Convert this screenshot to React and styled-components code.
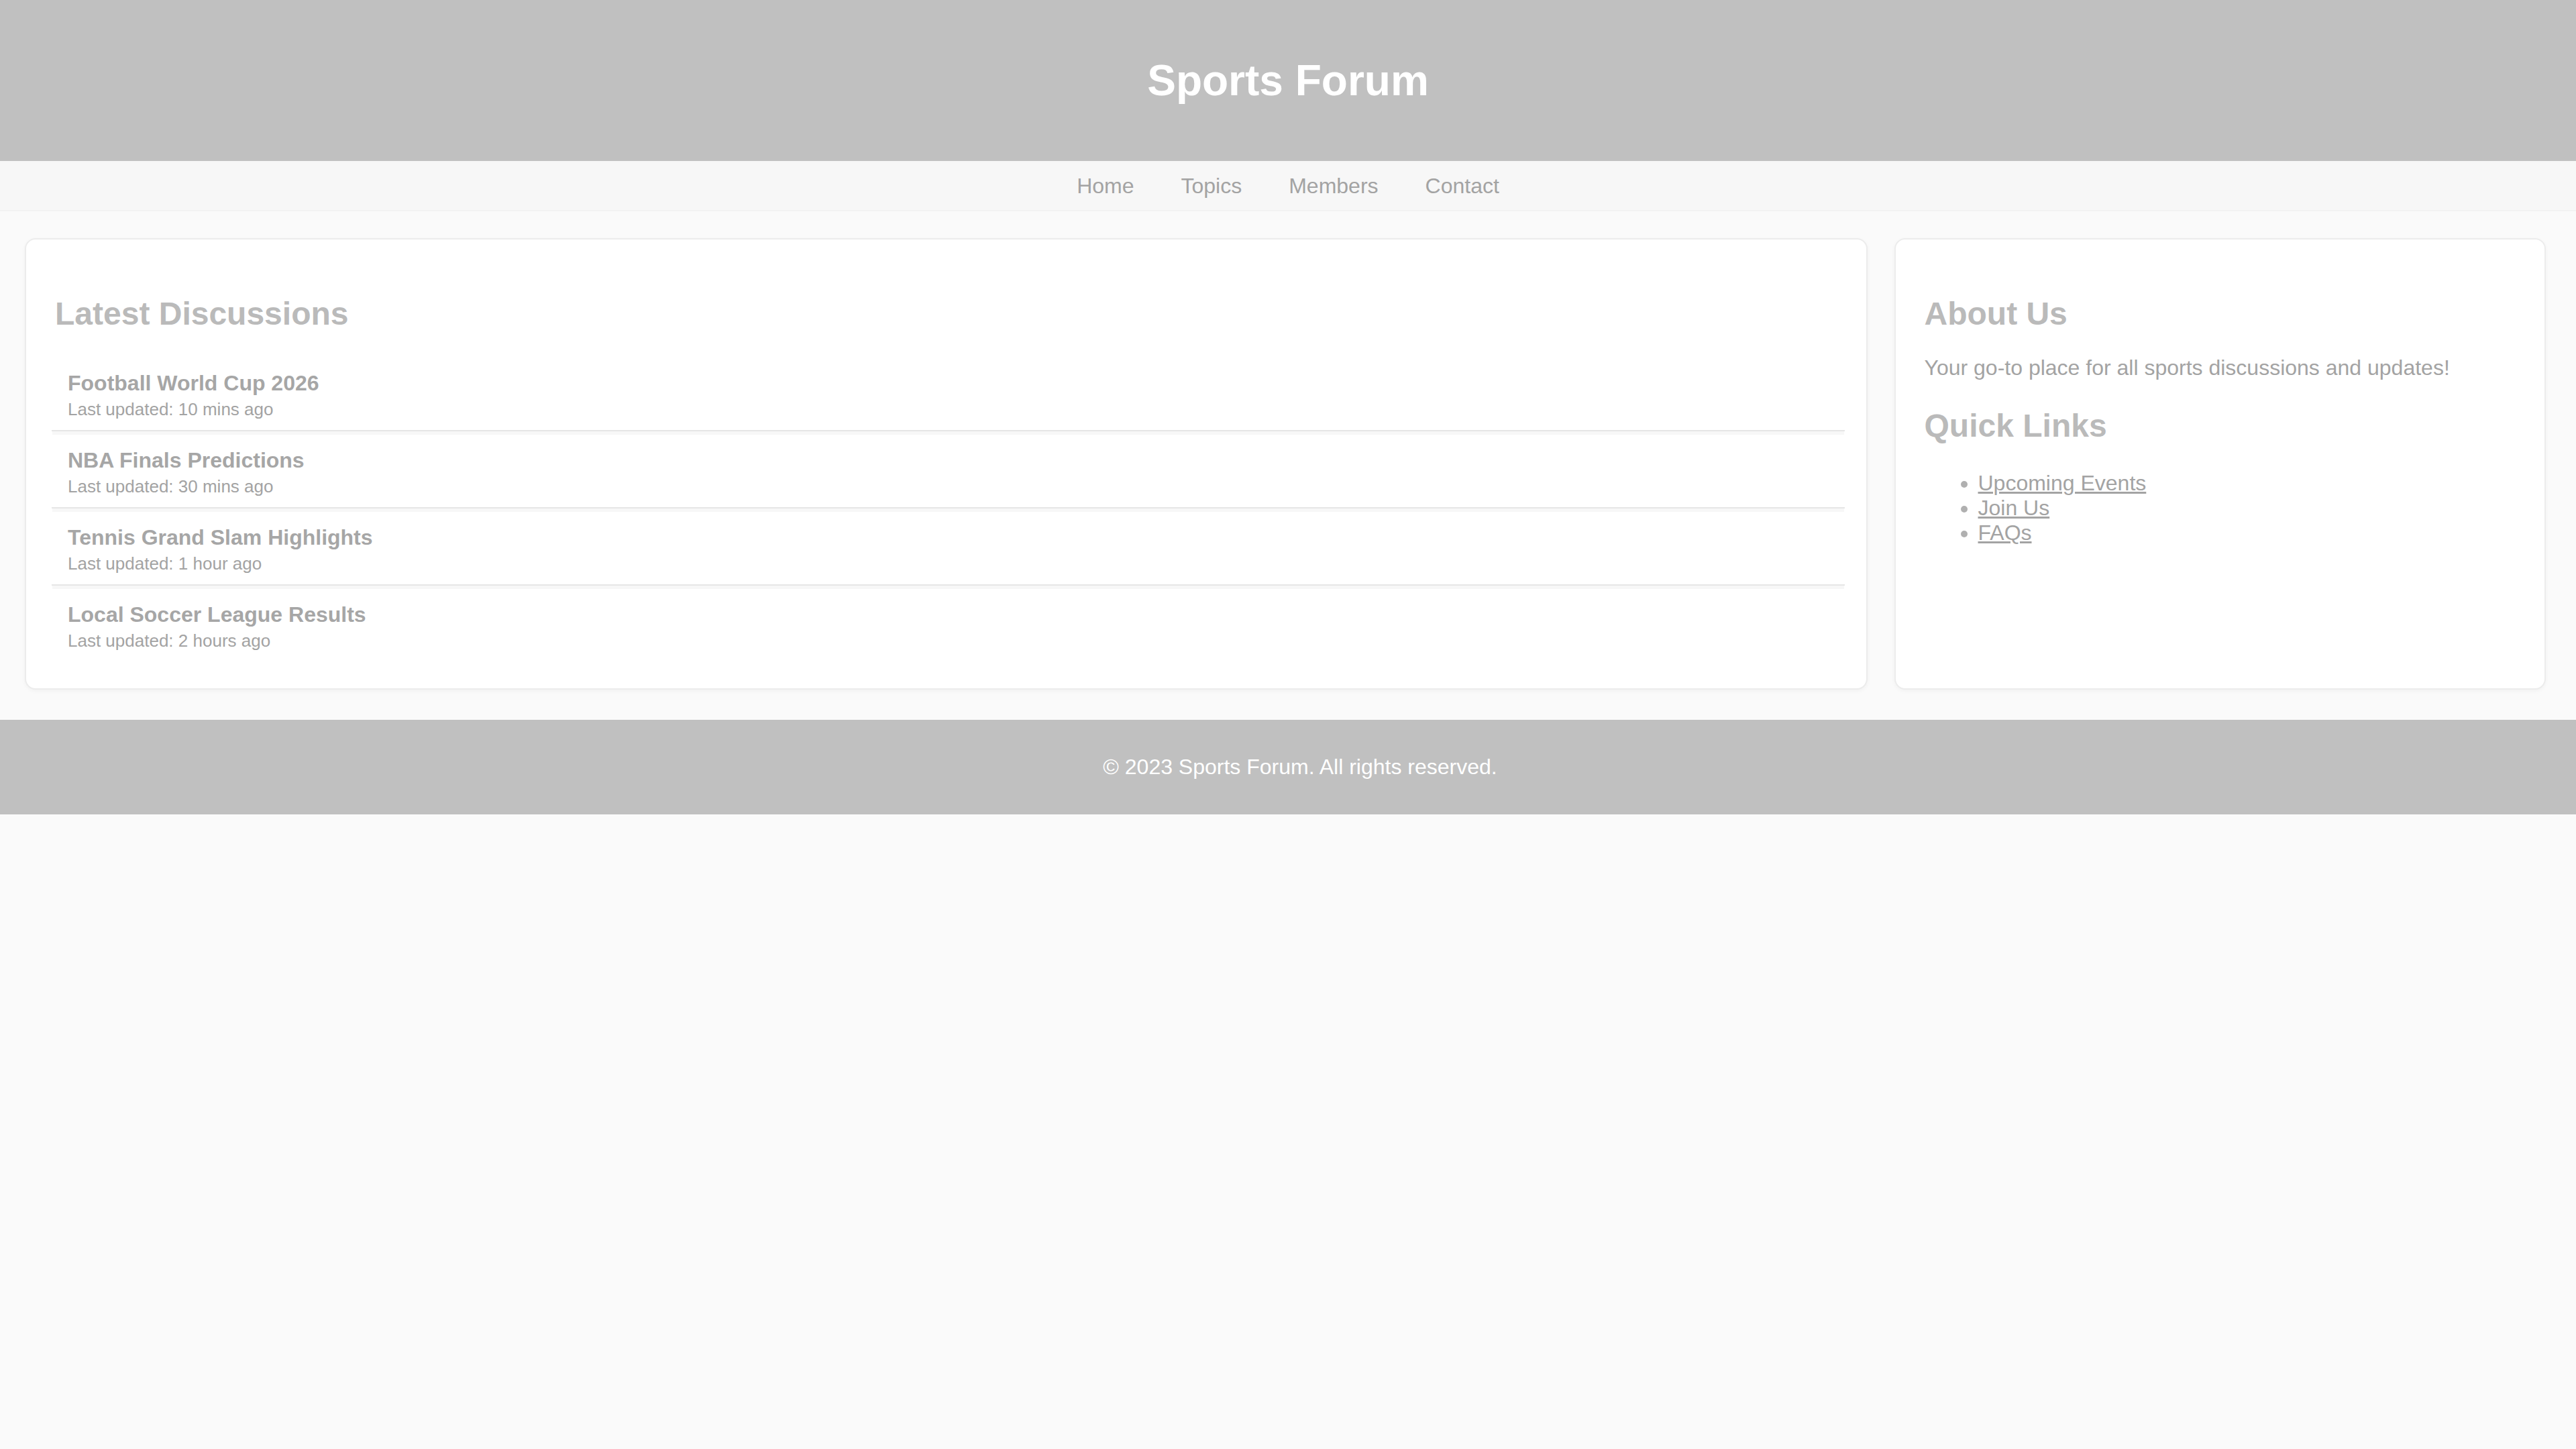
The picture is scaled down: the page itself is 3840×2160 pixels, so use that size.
import React from "react";
import styled, { createGlobalStyle } from "styled-components";

const GlobalStyle = createGlobalStyle`
  html, body {
    margin: 0;
    padding: 0;
    background: #fafafa;
    font-family: "Liberation Sans", Arial, sans-serif;
  }
`;

const discussions = [
  { title: "Football World Cup 2026", updated: "10 mins ago" },
  { title: "NBA Finals Predictions", updated: "30 mins ago" },
  { title: "Tennis Grand Slam Highlights", updated: "1 hour ago" },
  { title: "Local Soccer League Results", updated: "2 hours ago" },
];

const quickLinks = ["Upcoming Events", "Join Us", "FAQs"];

const navLinks = ["Home", "Topics", "Members", "Contact"];

export default function App() {
  return (
    <Page>
      <GlobalStyle />
      <Header>
        <Title>Sports Forum</Title>
      </Header>
      <Nav>
        {navLinks.map((link) => (
          <NavLink key={link} href="#">
            {link}
          </NavLink>
        ))}
      </Nav>
      <Main>
        <Card grow={3}>
          <Heading>Latest Discussions</Heading>
          <List>
            {discussions.map((d, i) => (
              <Item key={d.title} last={i === discussions.length - 1}>
                <ItemTitle>{d.title}</ItemTitle>
                <ItemMeta>Last updated: {d.updated}</ItemMeta>
              </Item>
            ))}
          </List>
        </Card>
        <Card grow={1}>
          <Heading tight>About Us</Heading>
          <Text>Your go-to place for all sports discussions and updates!</Text>
          <Heading>Quick Links</Heading>
          <LinkList>
            {quickLinks.map((l) => (
              <li key={l}>
                <QuickLink href="#">{l}</QuickLink>
              </li>
            ))}
          </LinkList>
        </Card>
      </Main>
      <Footer>
        <FooterText>© 2023 Sports Forum. All rights reserved.</FooterText>
      </Footer>
    </Page>
  );
}

const Page = styled.div`
  min-height: 2160px;
  background: #fafafa;
`;

const Header = styled.header`
  background: #c0c0c0;
  height: 240px;
  display: flex;
  align-items: center;
  justify-content: center;
`;

const Title = styled.h1`
  margin: 0;
  color: #ffffff;
  font-size: 64px;
  font-weight: 700;
`;

const Nav = styled.nav`
  background: #f7f7f7;
  height: 71px;
  padding-top: 2px;
  border-bottom: 2px solid #f2f2f2;
  display: flex;
  align-items: center;
  justify-content: center;
  gap: 70px;
`;

const NavLink = styled.a`
  color: #a3a3a3;
  font-size: 32px;
  text-decoration: none;
`;

const Main = styled.main`
  display: flex;
  gap: 40px;
  padding: 40px 45px 45px 37px;
`;

const Card = styled.section`
  flex: ${(p) => p.grow};
  background: #ffffff;
  border: 2px solid #ececec;
  border-radius: 16px;
  box-shadow: 0 2px 6px rgba(0, 0, 0, 0.04);
  padding: 43px 37px 40px 43px;
`;

const Heading = styled.h2`
  margin: 40px 0 ${(p) => (p.tight ? "35px" : "40px")};
  color: #bababa;
  font-size: 48px;
  font-weight: 700;
  line-height: 55px;
`;

const List = styled.div`
  display: flex;
  flex-direction: column;
  margin: 0 -5px;
`;

const Item = styled.div`
  padding: 18px 24px 16px;
  margin-bottom: ${(p) => (p.last ? "0" : "7px")};
  border-bottom: ${(p) => (p.last ? "none" : "2px solid #e6e6e6")};
  box-shadow: ${(p) => (p.last ? "none" : "0 6px 0 -1px #f7f7f7")};
`;

const ItemTitle = styled.div`
  color: #a6a6a6;
  font-size: 32px;
  font-weight: 700;
  line-height: 37px;
`;

const ItemMeta = styled.div`
  margin-top: 5px;
  color: #a3a3a3;
  font-size: 26px;
  line-height: 30px;
`;

const Text = styled.p`
  margin: 32px 0;
  color: #a3a3a3;
  font-size: 32px;
  line-height: 37px;
`;

const LinkList = styled.ul`
  margin: 32px 0;
  padding-left: 80px;
  color: #b0b0b0;
  font-size: 32px;
  line-height: 37px;
`;

const QuickLink = styled.a`
  color: #a3a3a3;
  text-decoration: underline;
`;

const Footer = styled.footer`
  background: #c0c0c0;
  height: 141px;
  padding-left: 36px;
  display: flex;
  align-items: center;
  justify-content: center;
`;

const FooterText = styled.p`
  margin: 0;
  color: #ffffff;
  font-size: 32px;
`;
